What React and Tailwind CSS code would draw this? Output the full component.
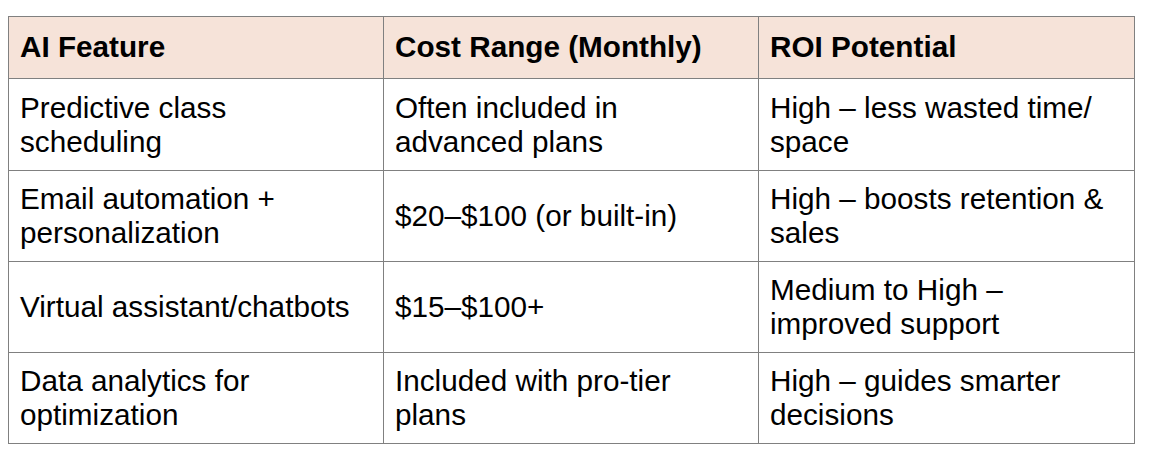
import React from "react";

const rows = [
  ["Predictive class scheduling", "Often included in advanced plans", "High – less wasted time/ space", "h-[92px]"],
  ["Email automation + personalization", "$20–$100 (or built-in)", "High – boosts retention & sales", "h-[91px]"],
  ["Virtual assistant/chatbots", "$15–$100+", "Medium to High – improved support", "h-[91px]"],
  ["Data analytics for optimization", "Included with pro-tier plans", "High – guides smarter decisions", "h-[91px]"],
];

const breaks = {
  "Predictive class scheduling": ["Predictive class", "scheduling"],
  "Often included in advanced plans": ["Often included in", "advanced plans"],
  "High – less wasted time/ space": ["High – less wasted time/", "space"],
  "Email automation + personalization": ["Email automation +", "personalization"],
  "High – boosts retention & sales": ["High – boosts retention &", "sales"],
  "Medium to High – improved support": ["Medium to High –", "improved support"],
  "Data analytics for optimization": ["Data analytics for", "optimization"],
  "Included with pro-tier plans": ["Included with pro-tier", "plans"],
  "High – guides smarter decisions": ["High – guides smarter", "decisions"],
};

function Cell({ text, h, last }) {
  const lines = breaks[text] || [text];
  return (
    <div
      className={`${h} flex flex-col justify-center border-b border-r border-[#808080] pl-[11px] pr-[8px] ${last ? "w-[376px]" : "w-[375px]"}`}
    >
      {lines.map((l, i) => (
        <div key={i} className="whitespace-nowrap leading-[34px]">
          {l}
        </div>
      ))}
    </div>
  );
}

export default function App() {
  return (
    <div
      className="w-[1156px] h-[464px] bg-white text-black pt-[16px] pl-[8px] text-[29.7px]"
      style={{ fontFamily: '"Liberation Sans", Arial, sans-serif' }}
    >
      <div className="w-[1127px] border-l border-t border-[#808080]">
        <div className="flex bg-[#f6e3d9] font-bold">
          {["AI Feature", "Cost Range (Monthly)", "ROI Potential"].map((t, i) => (
            <div
              key={t}
              className={`h-[62px] flex items-center border-b border-r border-[#808080] pl-[11px] whitespace-nowrap ${i === 2 ? "w-[376px]" : "w-[375px]"}`}
            >
              {t}
            </div>
          ))}
        </div>
        {rows.map((r, ri) => (
          <div key={ri} className="flex">
            <Cell text={r[0]} h={r[3]} />
            <Cell text={r[1]} h={r[3]} />
            <Cell text={r[2]} h={r[3]} last />
          </div>
        ))}
      </div>
    </div>
  );
}
